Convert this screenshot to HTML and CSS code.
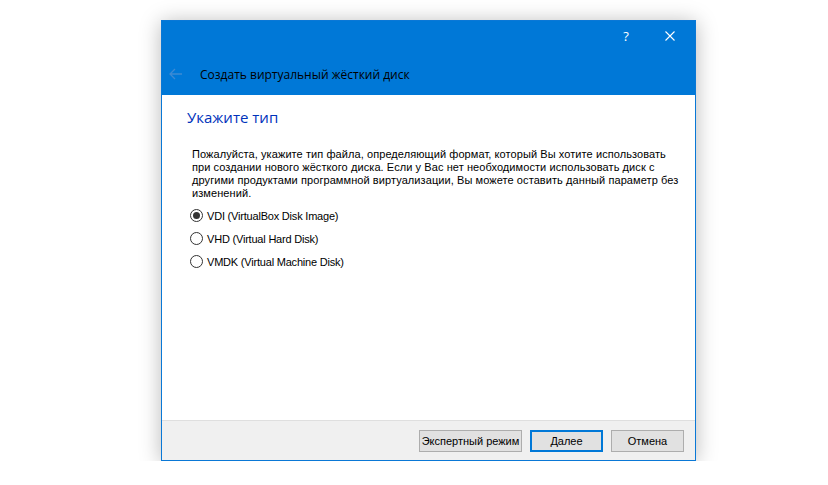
FILE: index.html
```html
<!DOCTYPE html>
<html lang="ru">
<head>
<meta charset="utf-8">
<link rel="stylesheet" href="styles.css">
</head>
<body>
<div class="window">
  <div class="titlebar">
    <div class="caption-buttons">
      <span class="cap-btn help">?</span>
      <span class="cap-btn close">
        <svg width="10" height="10" viewBox="0 0 10 10"><path d="M0.5 0.5 L9.5 9.5 M9.5 0.5 L0.5 9.5" stroke="#fff" stroke-width="1.1" fill="none"/></svg>
      </span>
    </div>
    <div class="wizard-head">
      <svg class="back" width="14" height="12" viewBox="0 0 14 12"><path d="M1 6 H13 M6 1 L1 6 L6 11" stroke="#3d8ad4" stroke-width="1.3" fill="none"/></svg>
      <span class="wizard-title">Создать виртуальный жёсткий диск</span>
    </div>
  </div>
  <div class="content">
    <h1 class="page-title">Укажите тип</h1>
    <p class="desc">Пожалуйста, укажите тип файла, определяющий формат, который Вы хотите использовать<br>при создании нового жёсткого диска. Если у Вас нет необходимости использовать диск с<br>другими продуктами программной виртуализации, Вы можете оставить данный параметр без<br>изменений.</p>
    <div class="options">
      <label class="option"><span class="radio checked"></span>VDI (VirtualBox Disk Image)</label>
      <label class="option"><span class="radio"></span>VHD (Virtual Hard Disk)</label>
      <label class="option"><span class="radio"></span>VMDK (Virtual Machine Disk)</label>
    </div>
  </div>
  <div class="footer">
    <span class="btn wide">Экспертный режим</span>
    <span class="btn default">Далее</span>
    <span class="btn">Отмена</span>
  </div>
</div>
</body>
</html>
```
FILE: styles.css
```css
html, body {
  margin: 0;
  padding: 0;
  background: #ffffff;
}
body {
  padding: 20px 0 0 161px;
}
.window {
  width: 533px;
  height: 439px;
  border: 1px solid #0a78d6;
  box-shadow: 0 2px 20px rgba(0, 0, 0, 0.28);
  display: flex;
  flex-direction: column;
  background: #fff;
}
.titlebar {
  background: #0078d7;
  height: 74px;
  display: flex;
  flex-direction: column;
}
.caption-buttons {
  display: flex;
  justify-content: flex-end;
  height: 30px;
}
.cap-btn {
  width: 46px;
  height: 30px;
  display: flex;
  align-items: center;
  justify-content: center;
  color: #fff;
}
.help {
  font-family: "Open Sans", sans-serif;
  font-size: 13px;
  width: 42px;
}
.close {
  width: 46px;
  margin-right: 2px;
}
.wizard-head {
  display: flex;
  align-items: center;
  height: 26px;
  margin-top: 10px;
  padding-left: 7px;
}
.back {
  margin-right: 17px;
}
.wizard-title {
  font-family: "Open Sans", sans-serif;
  font-size: 12px;
  color: #000;
}
.content {
  flex: 1;
  padding: 12px 0 0 25px;
}
.page-title {
  margin: 0;
  font-family: "Open Sans", sans-serif;
  font-weight: normal;
  font-size: 15px;
  color: #0033bb;
  line-height: 20px;
}
.desc {
  margin: 21px 0 0 5px;
  font-family: "Liberation Sans", sans-serif;
  font-size: 11px;
  letter-spacing: 0.08px;
  line-height: 13px;
  color: #000;
}
.options {
  margin: 9px 0 0 3px;
  display: flex;
  flex-direction: column;
  gap: 10px;
}
.option {
  display: flex;
  align-items: center;
  font-family: "Liberation Sans", sans-serif;
  font-size: 11px;
  letter-spacing: -0.2px;
  color: #000;
  height: 13px;
}
.radio {
  width: 11px;
  height: 11px;
  border: 1px solid #333;
  border-radius: 50%;
  margin-right: 4px;
  display: flex;
  align-items: center;
  justify-content: center;
  background: #fff;
}
.radio.checked::after {
  content: "";
  width: 7px;
  height: 7px;
  border-radius: 50%;
  background: #333;
}
.footer {
  height: 40px;
  border-top: 1px solid #dfdfdf;
  background: #f0f0f0;
  display: flex;
  align-items: flex-start;
  justify-content: flex-end;
  padding: 9px 11px 0 0;
  box-sizing: border-box;
  gap: 8px;
}
.btn {
  box-sizing: border-box;
  width: 73px;
  height: 22px;
  border: 1px solid #adadad;
  background: #e1e1e1;
  display: flex;
  align-items: center;
  justify-content: center;
  font-family: "Liberation Sans", sans-serif;
  font-size: 11px;
  color: #000;
}
.btn.wide {
  width: 103px;
}
.btn.default {
  border: 2px solid #0078d7;
}
```
